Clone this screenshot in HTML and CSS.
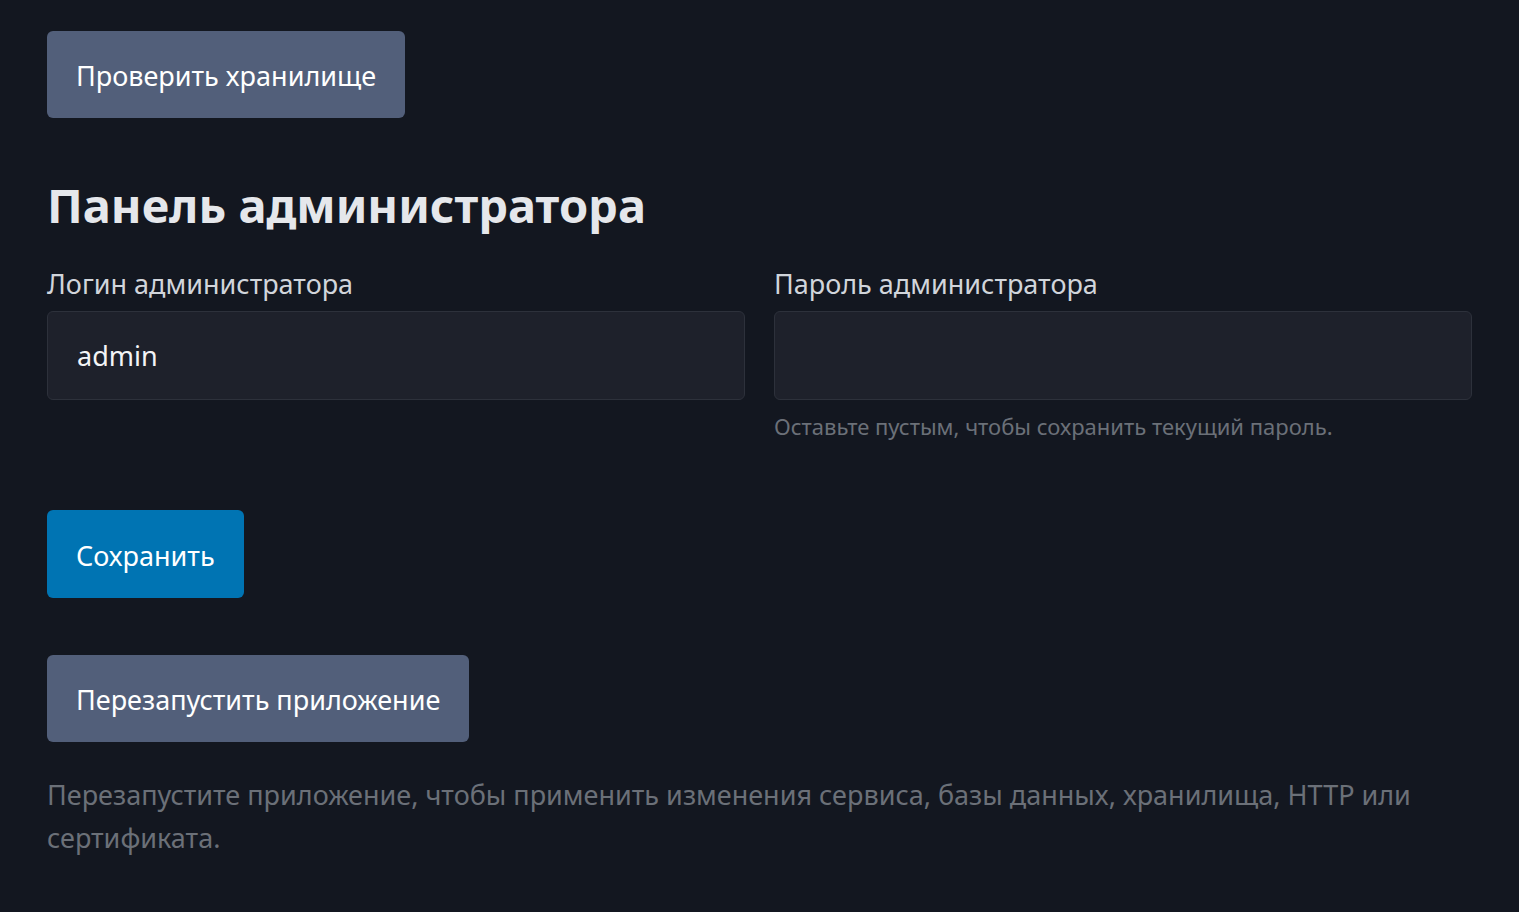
FILE: index.html
```html
<!DOCTYPE html>
<html lang="ru">
<head>
  <meta charset="UTF-8">
  <meta name="viewport" content="width=device-width, initial-scale=1.0">
  <title>Настройки</title>
  <link rel="stylesheet" href="styles.css">
</head>
<body>
  <div class="settings">
    <!-- Storage check -->
    <div class="row">
      <button class="btn btn-secondary" type="button">Проверить хранилище</button>
    </div>

    <!-- Admin panel -->
    <h2 class="section-title">Панель администратора</h2>
    <div class="form-grid">
      <div class="field">
        <label class="field-label" for="admin-login">Логин администратора</label>
        <input id="admin-login" class="input-field" type="text" value="admin">
      </div>
      <div class="field">
        <label class="field-label" for="admin-password">Пароль администратора</label>
        <input id="admin-password" class="input-field" type="password">
        <p class="field-hint">Оставьте пустым, чтобы сохранить текущий пароль.</p>
      </div>
    </div>

    <div class="row save-row">
      <button class="btn btn-primary" type="button">Сохранить</button>
    </div>

    <div class="row restart-row">
      <button class="btn btn-secondary" type="button">Перезапустить приложение</button>
    </div>
    <p class="restart-note">Перезапустите приложение, чтобы применить изменения сервиса, базы данных, хранилища, HTTP или сертификата.</p>
  </div>
</body>
</html>
```

FILE: styles.css
```css
* {
  margin: 0;
  padding: 0;
  box-sizing: border-box;
}

body {
  font-family: 'Noto Sans', 'Open Sans', sans-serif;
  background-color: #131720;
  color: #d1d5db;
}

.settings {
  padding: 31px 47px 40px;
}

.row {
  display: flex;
}

.btn {
  height: 87px;
  padding: 2px 29px 0;
  border: none;
  border-radius: 6px;
  font-family: inherit;
  font-size: 27px;
  color: #ffffff;
  cursor: pointer;
}

.btn-secondary {
  background-color: #525f7a;
}

.btn-primary {
  background-color: #0074b3;
  height: 88px;
}

.section-title {
  margin-top: 58px;
  font-size: 47px;
  line-height: 59px;
  font-weight: 700;
  color: #e5e7eb;
}

.form-grid {
  display: grid;
  grid-template-columns: 1fr 1fr;
  gap: 29px;
  margin-top: 28px;
}

.field {
  display: flex;
  flex-direction: column;
}

.field-label {
  font-size: 27px;
  line-height: 42px;
  margin-bottom: 6px;
  color: #d1d5db;
}

.input-field {
  height: 89px;
  padding: 0 29px;
  background-color: #1e212b;
  border: 1px solid #2d313b;
  border-radius: 6px;
  font-family: inherit;
  font-size: 27px;
  color: #f3f4f6;
  outline: none;
}

.field-hint {
  margin-top: 10px;
  font-size: 22px;
  line-height: 33px;
  color: #6b7078;
}

.save-row {
  margin-top: 67px;
}

.restart-row {
  margin-top: 57px;
}

.restart-note {
  margin-top: 31px;
  max-width: 1380px;
  font-size: 27px;
  line-height: 43px;
  color: #6b7078;
}
```
